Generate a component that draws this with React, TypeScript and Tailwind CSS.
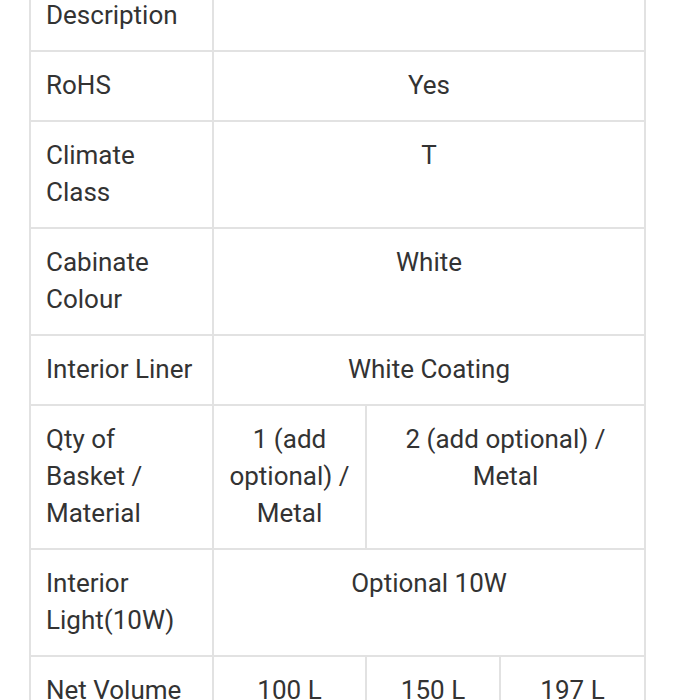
const rows: { label: string; values: { text: string; span: number }[] }[] = [
  { label: "Description", values: [{ text: "", span: 3 }] },
  { label: "RoHS", values: [{ text: "Yes", span: 3 }] },
  { label: "Climate Class", values: [{ text: "T", span: 3 }] },
  { label: "Cabinate Colour", values: [{ text: "White", span: 3 }] },
  { label: "Interior Liner", values: [{ text: "White Coating", span: 3 }] },
  {
    label: "Qty of Basket / Material",
    values: [
      { text: "1 (add optional) / Metal", span: 1 },
      { text: "2 (add optional) / Metal", span: 2 },
    ],
  },
  { label: "Interior Light(10W)", values: [{ text: "Optional 10W", span: 3 }] },
  {
    label: "Net Volume",
    values: [
      { text: "100 L", span: 1 },
      { text: "150 L", span: 1 },
      { text: "197 L", span: 1 },
    ],
  },
];

export default function App() {
  return (
    <div className="h-[700px] w-[700px] overflow-hidden bg-white font-['Roboto',sans-serif] text-[26px] leading-[37px] text-[#333]">
      <table className="ml-[29px] -mt-[20px] w-[615px] table-fixed border-collapse">
        <colgroup>
          <col className="w-[183px]" />
          <col className="w-[153px]" />
          <col className="w-[134px]" />
          <col className="w-[145px]" />
        </colgroup>
        <tbody>
          {rows.map((row) => (
            <tr key={row.label}>
              <td className="border-2 border-[#e2e2e2] px-[15px] pt-[15px] pb-[16px] align-top">
                {row.label}
              </td>
              {row.values.map((v, i) => (
                <td
                  key={i}
                  colSpan={v.span}
                  className="border-2 border-[#e2e2e2] px-[15px] pt-[15px] pb-[16px] text-center align-top"
                >
                  {v.text}
                </td>
              ))}
            </tr>
          ))}
        </tbody>
      </table>
    </div>
  );
}
